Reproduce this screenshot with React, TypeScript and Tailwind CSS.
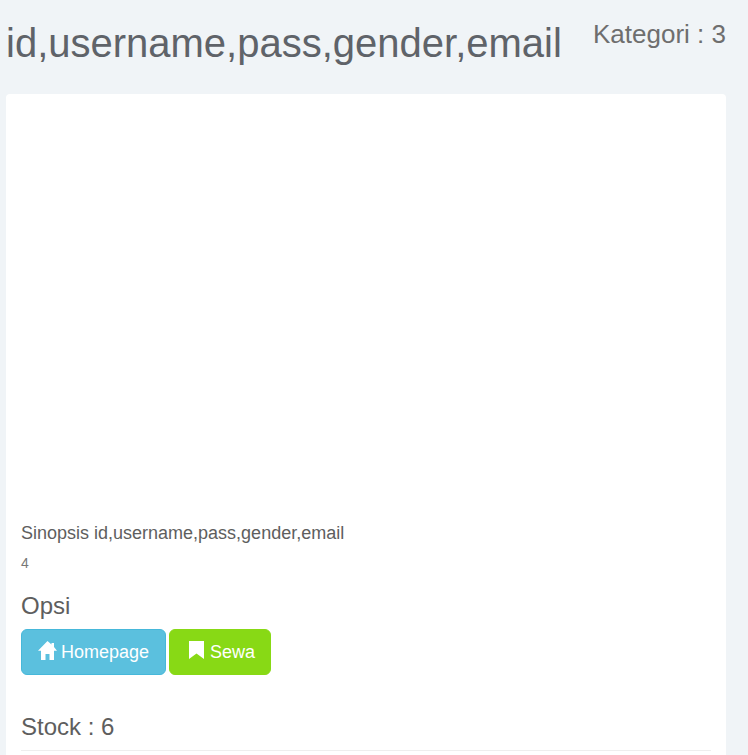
export default function App() {
  return (
    <div className="h-[755px] overflow-hidden bg-[#f0f4f7] font-['Liberation_Sans',sans-serif] text-[#5e5e5e]">
      <div className="flex items-start justify-between pl-[6px] pr-[22px]">
        <h1 className="mt-[21px] text-[40px] leading-[44px] font-normal text-[#5f6369]">id,username,pass,gender,email</h1>
        <h3 className="mt-[18px] text-[26px] leading-[32px] font-normal text-[#6e6e6e]">Kategori : 3</h3>
      </div>
      <div className="mt-[29px] ml-[6px] mr-[22px] rounded-[4px] bg-white px-[15px] pt-[428px] pb-[40px]">
        <p className="text-[18px] leading-[22px]">Sinopsis id,username,pass,gender,email</p>
        <p className="mt-[11px] text-[14px] leading-[17px] text-[#777]">4</p>
        <h4 className="mt-[20px] text-[24px] leading-[28px] font-normal">Opsi</h4>
        <div className="mt-[9px] flex gap-[3px]">
          <button className="flex h-[46px] w-[145px] items-center gap-[4px] rounded-[6px] border border-[#46b8da] bg-[#5bc0de] pl-[16px] text-[18px] text-white">
            {/* home glyph */}
            <svg viewBox="0 0 19 19" className="h-[19px] w-[19px] -translate-y-[2px]" fill="currentColor">
              <path d="M9.5 0 L13.5 3.6 V2 H16 V6 L19 9.8 H16 V19 H11.5 V13 H7.5 V19 H3 V9.8 H0 Z" />
            </svg>
            Homepage
          </button>
          <button className="flex h-[46px] w-[102px] items-center gap-[6px] rounded-[6px] border border-[#88d915] bg-[#88d915] pl-[19px] text-[18px] text-white">
            {/* bookmark glyph */}
            <svg viewBox="0 0 15 18" className="h-[18px] w-[15px] -translate-y-[2px]" fill="currentColor">
              <path d="M0 0 H15 V18 L7.5 12.5 L0 18 Z" />
            </svg>
            Sewa
          </button>
        </div>
        <h3 className="mt-[38px] border-b border-[#eee] pb-[9px] text-[24px] leading-[28px] font-normal">Stock : 6</h3>
      </div>
    </div>
  );
}
